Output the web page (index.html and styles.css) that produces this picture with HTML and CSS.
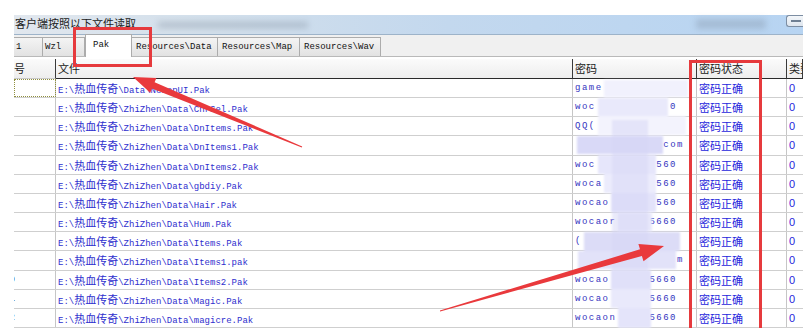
FILE: index.html
```html
<!doctype html>
<html lang="zh-CN">
    <head>
        <meta charset="utf-8" />
        <title>Pak 读取列表</title>
        <link rel="stylesheet" href="styles.css">
    </head>

    <body>
        <div class="app">
            <div class="caption">
                <span class="title">客户端按照以下文件读取</span>
                <span class="smudge"></span>
                <span class="smudge dark"></span>
                <span class="min-btn"><i></i></span>
            </div>

            <div class="tabs">
                <div class="tab t1">1</div>
                <div class="tab t2">Wzl</div>
                <div class="tab t3 on">Pak</div>
                <div class="tab t4">Resources\Data</div>
                <div class="tab t5">Resources\Map</div>
                <div class="tab t6">Resources\Wav</div>
            </div>

            <div class="list">
                <div class="row head">
                    <div class="cell hidx">号</div>
                    <div class="cell">文件</div>
                    <div class="cell">密码</div>
                    <div class="cell">密码状态</div>
                    <div class="cell">类型</div>
                </div>

                <div class="row">
                    <div class="cell idx focus">0</div>
                    <div class="cell path">E:\<span class="cn">热血传奇</span>\Data\NewopUI.Pak</div>
                    <div class="cell pwd"><span>game</span><span></span></div>
                    <div class="cell ok">密码正确</div>
                    <div class="cell num">0</div>
                </div>
                <div class="row">
                    <div class="cell idx">1</div>
                    <div class="cell path">E:\<span class="cn">热血传奇</span>\ZhiZhen\Data\ChrSel.Pak</div>
                    <div class="cell pwd"><span>woc</span><span>0</span></div>
                    <div class="cell ok">密码正确</div>
                    <div class="cell num">0</div>
                </div>
                <div class="row">
                    <div class="cell idx">2</div>
                    <div class="cell path">E:\<span class="cn">热血传奇</span>\ZhiZhen\Data\DnItems.Pak</div>
                    <div class="cell pwd"><span>QQ(</span><span></span></div>
                    <div class="cell ok">密码正确</div>
                    <div class="cell num">0</div>
                </div>
                <div class="row">
                    <div class="cell idx">3</div>
                    <div class="cell path">E:\<span class="cn">热血传奇</span>\ZhiZhen\Data\DnItems1.Pak</div>
                    <div class="cell pwd tail-far"><span></span><span>com</span></div>
                    <div class="cell ok">密码正确</div>
                    <div class="cell num">0</div>
                </div>
                <div class="row">
                    <div class="cell idx">4</div>
                    <div class="cell path">E:\<span class="cn">热血传奇</span>\ZhiZhen\Data\DnItems2.Pak</div>
                    <div class="cell pwd"><span>woc</span><span>560</span></div>
                    <div class="cell ok">密码正确</div>
                    <div class="cell num">0</div>
                </div>
                <div class="row">
                    <div class="cell idx">5</div>
                    <div class="cell path">E:\<span class="cn">热血传奇</span>\ZhiZhen\Data\gbdiy.Pak</div>
                    <div class="cell pwd"><span>woca</span><span>560</span></div>
                    <div class="cell ok">密码正确</div>
                    <div class="cell num">0</div>
                </div>
                <div class="row">
                    <div class="cell idx">6</div>
                    <div class="cell path">E:\<span class="cn">热血传奇</span>\ZhiZhen\Data\Hair.Pak</div>
                    <div class="cell pwd"><span>wocao</span><span>560</span></div>
                    <div class="cell ok">密码正确</div>
                    <div class="cell num">0</div>
                </div>
                <div class="row">
                    <div class="cell idx">7</div>
                    <div class="cell path">E:\<span class="cn">热血传奇</span>\ZhiZhen\Data\Hum.Pak</div>
                    <div class="cell pwd"><span>wocaor</span><span>5660</span></div>
                    <div class="cell ok">密码正确</div>
                    <div class="cell num">0</div>
                </div>
                <div class="row">
                    <div class="cell idx">8</div>
                    <div class="cell path">E:\<span class="cn">热血传奇</span>\ZhiZhen\Data\Items.Pak</div>
                    <div class="cell pwd"><span>(</span><span></span></div>
                    <div class="cell ok">密码正确</div>
                    <div class="cell num">0</div>
                </div>
                <div class="row">
                    <div class="cell idx">9</div>
                    <div class="cell path">E:\<span class="cn">热血传奇</span>\ZhiZhen\Data\Items1.pak</div>
                    <div class="cell pwd tail-far"><span></span><span>m</span></div>
                    <div class="cell ok">密码正确</div>
                    <div class="cell num">0</div>
                </div>
                <div class="row">
                    <div class="cell idx">10</div>
                    <div class="cell path">E:\<span class="cn">热血传奇</span>\ZhiZhen\Data\Items2.Pak</div>
                    <div class="cell pwd"><span>wocao</span><span>5660</span></div>
                    <div class="cell ok">密码正确</div>
                    <div class="cell num">0</div>
                </div>
                <div class="row">
                    <div class="cell idx">11</div>
                    <div class="cell path">E:\<span class="cn">热血传奇</span>\ZhiZhen\Data\Magic.Pak</div>
                    <div class="cell pwd"><span>wocao</span><span>5660</span></div>
                    <div class="cell ok">密码正确</div>
                    <div class="cell num">0</div>
                </div>
                <div class="row">
                    <div class="cell idx">12</div>
                    <div class="cell path">E:\<span class="cn">热血传奇</span>\ZhiZhen\Data\magicre.Pak</div>
                    <div class="cell pwd"><span>wocaon</span><span>5660</span></div>
                    <div class="cell ok">密码正确</div>
                    <div class="cell num">0</div>
                </div>
            </div>
        </div>

        <!-- pixelated cover over the password column -->
        <div class="mosaic">
            <span class="blot b1"></span>
            <span class="blot b2"></span>
            <span class="blot b3"></span>
            <span class="blot b4"></span>
            <span class="blot b5"></span>
            <span class="blot b6"></span>
            <span class="blot b7"></span>
            <span class="blot b8"></span>
            <span class="blot b9"></span>
            <span class="blot b10"></span>
            <span class="blot b11"></span>
            <span class="blot b12"></span>
            <span class="blot b13"></span>
            <span class="blot b14"></span>
        </div>

        <!-- red annotations drawn on top of the screenshot -->
        <svg class="marks" width="803" height="328" viewBox="0 0 803 328">
            <rect x="74.5" y="28.5" width="76" height="37" />
            <rect x="690.5" y="61.5" width="70" height="280" />
            <polygon points="302.2,146.5 154.6,82.2 156.4,78 133,77 150.2,92.8 152,88.6 301.8,147.5" />
            <polygon points="439.9,310.5 640,249.3 638.4,244 664,246 643.5,261.3 641.9,256 440.1,311.5" />
        </svg>
    </body>
</html>
```

FILE: styles.css
```css
body {
    margin: 0;
    background: #fff;
    font-family: "Liberation Mono", "Noto Sans CJK SC", monospace;
    font-size: 9px;
    color: #111;
    overflow: hidden;
}
.app {
    margin: 15px 0 0 14px;
}

/* caption */
.caption {
    display: flex;
    align-items: flex-start;
    height: 19px;
    border-bottom: 1px solid #9db3c9;
    background: linear-gradient(to right, #e1e7ee 0%, #d2dfeb 25%, #c3d8ee 55%, #b7d4f2 100%);
}
.caption .title {
    font-family: "Noto Sans CJK SC", sans-serif;
    font-size: 11px;
    line-height: 14px;
    padding: 1px 0 0 1px;
    color: #222;
}
.smudge {
    width: 150px;
    height: 6px;
    margin: 7px 0 0 22px;
    background: #8896a6;
    opacity: 0.45;
    filter: blur(3px);
}
.smudge.dark {
    width: 70px;
    height: 10px;
    margin: 4px 0 0 auto;
    background: #7e8ea1;
    opacity: 0.35;
}
.min-btn {
    width: 16px;
    height: 10px;
    margin: 0 0 0 20px;
    border: 1px solid #7d8ea3;
    border-right: none;
    border-radius: 3px 0 0 3px;
    background: linear-gradient(#f4f7fa, #dde5ee);
}
.min-btn i {
    display: block;
    width: 10px;
    height: 2px;
    margin: 4px 0 0 4px;
    background: #6e7f93;
}

/* tabs */
.tabs {
    display: flex;
    align-items: flex-start;
    height: 21px;
    background: #f0f0f0;
    border-bottom: 1px solid #b9b9b9;
}
.tab {
    box-sizing: border-box;
    height: 19px;
    margin-top: 2px;
    padding: 4px 0 0 4px;
    line-height: 11px;
    border-top: 1px solid #acacac;
    border-right: 1px solid #acacac;
    background: linear-gradient(#f4f4f4, #e2e2e2);
    white-space: nowrap;
    color: #111;
}
.tab.on {
    height: 23px;
    margin-top: -1px;
    padding: 5px 0 0 7px;
    border-left: 1px solid #acacac;
    background: #fff;
    position: relative;
}
.t1 { width: 29px; padding-left: 2px; }
.t2 { width: 42px; padding-left: 2px; }
.t3 { width: 47px; }
.t4 { width: 86px; }
.t5 { width: 82px; }
.t6 { width: 81px; }

/* list */
.list {
    margin-top: 2px;
}
.row {
    display: grid;
    grid-template-columns: 42px 517px 124px 90px 1fr;
    box-sizing: border-box;
    height: 19.17px;
    border-bottom: 1px solid #cfcfcf;
}
.cell {
    overflow: hidden;
    white-space: nowrap;
    padding-left: 2px;
    line-height: 18px;
    border-right: 1px solid #c6c6c6;
}
.head {
    height: 20px;
    border-bottom: none;
    background: linear-gradient(#fbfbfb, #ededed);
}
.head .cell {
    font-family: "Noto Sans CJK SC", sans-serif;
    font-size: 11px;
    line-height: 19px;
    color: #222;
    border-right: 1px solid #3a3a3a;
    border-bottom: 1px solid #2a2a2a;
}
.head .hidx {
    padding-left: 0;
    border-bottom-color: #c9c9c9;
}
.idx {
    text-indent: -12px;
    color: #222;
}
.focus {
    outline: 1px dotted #8f8f3e;
    outline-offset: -1px;
}
.path {
    color: #2f2fce;
}
.cn {
    font-family: "Noto Sans CJK SC", sans-serif;
    font-size: 11px;
}
.pwd {
    display: flex;
    justify-content: space-between;
    padding-right: 19px;
    color: #3434c0;
    letter-spacing: 1.5px;
}
.pwd.tail-far {
    padding-right: 12px;
}
.ok {
    font-family: "Noto Sans CJK SC", sans-serif;
    font-size: 11px;
    color: #2626dc;
}
.num {
    font-family: "Liberation Sans", sans-serif;
    font-size: 11px;
    color: #2626dc;
    border-right: none;
}

/* mosaic cover */
.mosaic {
    position: absolute;
    top: 0;
    left: 0;
    filter: blur(1px);
}
.blot {
    position: absolute;
    display: block;
    background: #ececfc;
}
.b1 { left: 604px; top: 80px; width: 84px; height: 17px; background: #f1f1fd; }
.b2 { left: 598px; top: 98px; width: 70px; height: 18px; background: #e9e9fb; }
.b3 { left: 598px; top: 116px; width: 88px; height: 19px; background: #f3f3fd; }
.b4 { left: 577px; top: 136px; width: 86px; height: 18px; background: #d9d9f7; }
.b5 { left: 598px; top: 155px; width: 58px; height: 19px; background: #e6e6fb; }
.b6 { left: 604px; top: 174px; width: 52px; height: 19px; background: #ececfc; }
.b7 { left: 611px; top: 193px; width: 45px; height: 19px; background: #e3e3fa; }
.b8 { left: 618px; top: 213px; width: 34px; height: 18px; background: #e8e8fb; }
.b9 { left: 584px; top: 232px; width: 96px; height: 19px; background: #dcdcf7; }
.b10 { left: 578px; top: 251px; width: 98px; height: 18px; background: #e2e2f9; }
.b11 { left: 611px; top: 270px; width: 40px; height: 19px; background: #e0e0f9; }
.b12 { left: 611px; top: 289px; width: 40px; height: 19px; background: #e9e9fb; }
.b13 { left: 618px; top: 308px; width: 33px; height: 20px; background: #e4e4fa; }
.b14 { left: 612px; top: 120px; width: 36px; height: 150px; background: #d6d6f6; opacity: 0.5; }

/* annotations */
.marks {
    position: absolute;
    top: 0;
    left: 0;
    pointer-events: none;
}
.marks rect {
    fill: none;
    stroke: #e63a3d;
    stroke-width: 3;
}
.marks polygon {
    fill: #e9393c;
}
```
